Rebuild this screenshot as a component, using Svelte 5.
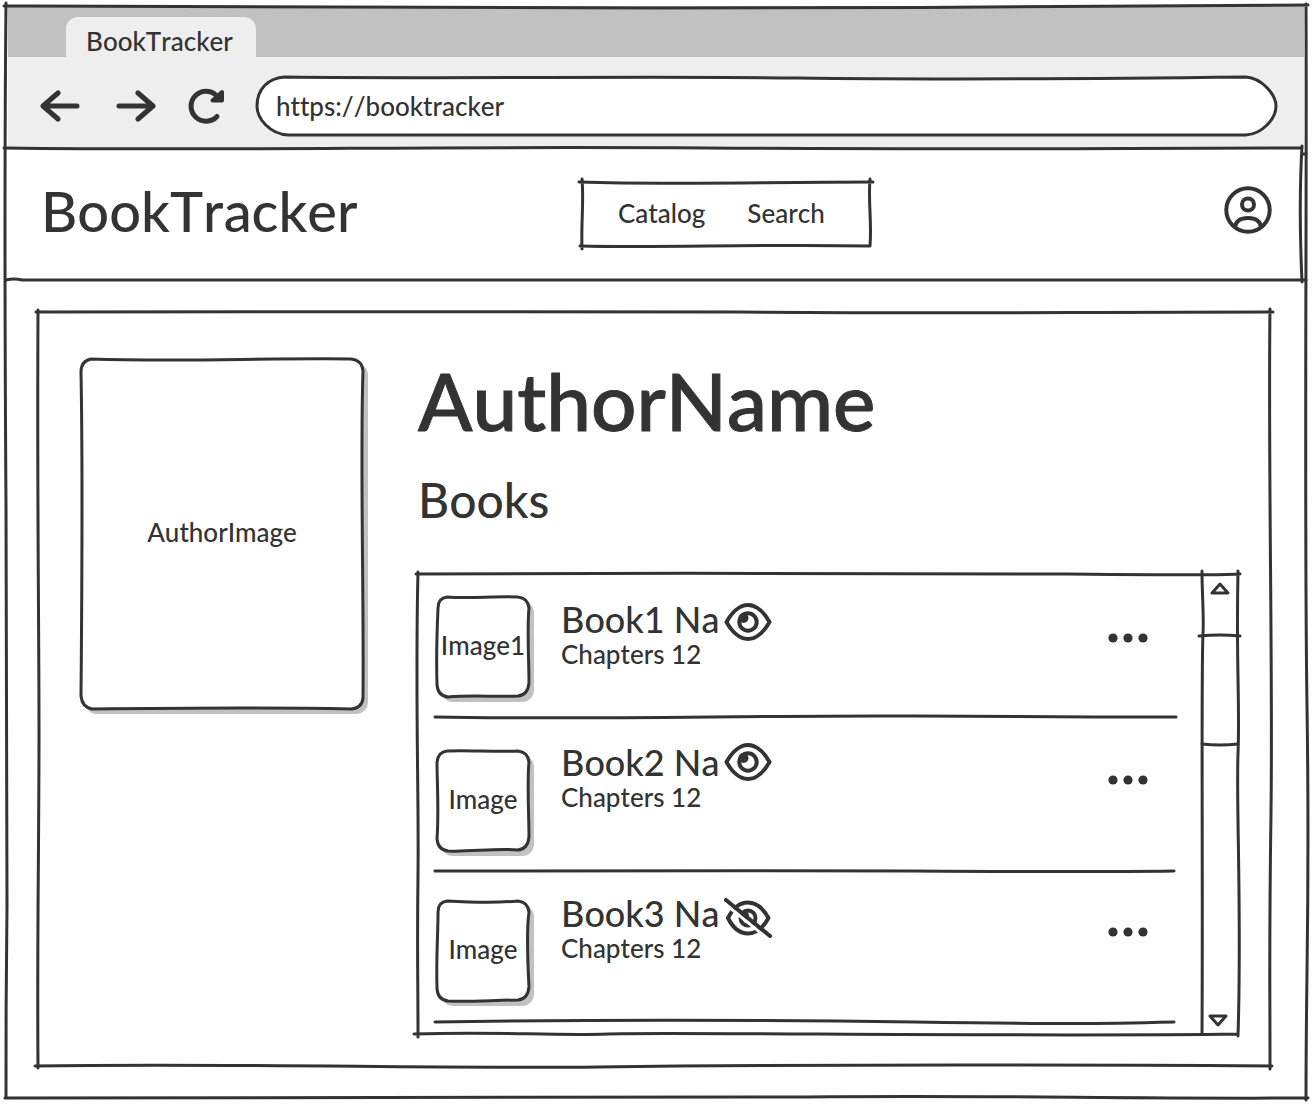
<script>
  const books = [
    { title: 'Book1 Na', image: 'Image1', chapters: 12, read: true, rule: 'M0 4 C150 7 330 2 480 3 S650 4 742 4' },
    { title: 'Book2 Na', image: 'Image', chapters: 12, read: true, rule: 'M0 4 C120 5 320 3 480 4 S660 5 740 4' },
    { title: 'Book3 Na', image: 'Image', chapters: 12, read: false, rule: 'M0 5 C130 3 330 3 480 5 S660 7 740 5' },
  ];
  let address = $state('https://booktracker');

  const thumbPaths = [
    'M12 2 C30 4 60 1 82 2 Q92 3 93 13 C91 35 93 65 93 88 Q92 100 82 101 C60 102 35 100 13 102 Q3 101 2 90 C1 60 2 35 3 13 Q3 3 12 2 Z',
    'M12 2 C30 1 60 3 82 2 Q92 3 93 13 C91 35 93 65 93 88 Q92 100 82 101 C60 99 35 103 13 102 Q3 101 2 90 C4 60 2 35 2 13 Q3 3 12 2 Z',
    'M12 2 C30 3 60 4 82 2 Q92 3 93 13 C90 35 92 65 93 88 Q92 100 82 101 C60 101 35 103 13 102 Q3 101 2 90 C1 60 3 35 3 13 Q3 3 12 2 Z',
  ];
</script>

{#snippet sketch(w, h, d)}
  <svg class="sketch" viewBox="0 0 {w} {h}" preserveAspectRatio="none" aria-hidden="true">
    <path {d} vector-effect="non-scaling-stroke" />
  </svg>
{/snippet}

<div class="page">
  <div class="window">
    <div class="tabs">
      <div class="tab">BookTracker</div>
    </div>
    <div class="toolbar">
      <button class="tool" aria-label="Back">
        <svg class="glyph" viewBox="0 0 40 32" width="40" height="32"><path d="M18 3 L3 16 L18 29 M3 16 H37" /></svg>
      </button>
      <button class="tool" aria-label="Forward">
        <svg class="glyph" viewBox="0 0 40 32" width="40" height="32"><path d="M22 3 L37 16 L22 29 M37 16 H3" /></svg>
      </button>
      <button class="tool reload" aria-label="Reload">
        <svg class="glyph" viewBox="0 0 38 36" width="38" height="36">
          <path d="M29 28.500 A15 15 0 1 1 28 7" />
          <path class="tip" d="M34 4 V12.500 H24.500 Z" />
        </svg>
      </button>
      <label class="address">
        {@render sketch(1018, 58, 'M29 0 C200 2 380 -1 540 1 S820 2 988 0 C1004 1 1018 18 1018 29 C1018 42 1004 57 988 58 C700 56 400 58 32 58 C14 57 1 42 1 29 C1 12 12 1 29 0 Z')}
        <input type="text" bind:value={address} aria-label="Address" />
      </label>
    </div>

    <header class="header">
      {@render sketch(1296, 132, 'M-2 0 C250 3 400 -2 700 0 S1100 0 1296 0 M1296 -2 C1293 50 1294 90 1296 134 M0 132 Q8 130 16 132 H1300 M1296 6 H1300')}
      <h1>BookTracker</h1>
      <nav class="nav">
        {@render sketch(288, 64, 'M-3 0 C90 3 180 0 291 0 M0 -3 C2 20 -1 40 0 67 M-2 64 C80 66 170 62 288 64 M288 -3 C286 20 290 40 288 64')}
        <a href="#catalog">Catalog</a>
        <a href="#search">Search</a>
      </nav>
      <button class="user" aria-label="Account">
        <svg class="glyph" viewBox="0 0 48 48" width="48" height="48">
          <circle cx="24" cy="24" r="21.7" />
          <circle cx="24" cy="18.5" r="6" />
          <path d="M11 41 C12 34 17 32 24 32 S36 34 37 41" />
        </svg>
      </button>
    </header>

    <main class="panel">
      {@render sketch(1232, 754, 'M-2 0 C300 2 450 -2 700 0 S1000 0 1235 0 M0 -2 C-1 200 1 300 1 420 S-1 620 0 756 M-3 754 C200 751 400 757 560 755 S900 752 1234 754 M1232 -3 C1230 150 1235 360 1233 500 S1232 650 1232 757')}
      <div class="portrait">
        <div class="shade"></div>
        {@render sketch(283, 352, 'M11 1 C100 4 180 0 270 1 Q281 2 282 13 C279 100 283 240 282 340 Q281 350 270 351 C180 349 90 350 12 351 Q2 349 1 338 C2 220 3 120 1 14 Q1 3 11 1 Z')}
        <span>AuthorImage</span>
      </div>
      <section class="details">
        <h2>AuthorName</h2>
        <h3>Books</h3>
        <div class="shelf">
          {@render sketch(820, 460, 'M-2 0 C200 -1 500 -1 650 0 S790 1 822 0 M0 -2 C-3 120 1 220 0 300 S0 400 0 463 M-4 460 C80 457 130 462 190 460 S620 463 820 460 M820 -3 C818 90 822 130 820 180 S824 340 820 462')}
          <ul>
            {#each books as book, i}
              <li>
                <div class="thumb">
                  <div class="shade"></div>
                  {@render sketch(95, 104, thumbPaths[i])}
                  <span>{book.image}</span>
                </div>
                <div class="info">
                  <div class="title">
                    <span>{book.title}</span>
                    <button aria-label={book.read ? 'Visible' : 'Hidden'}>
                      {#if book.read}
                        <svg class="glyph" viewBox="0 0 48 40" width="48" height="40">
                          <path d="M2.5 20 C8 10 16 3 24 3 S40 10 45.500 20 C40 30 32 37 24 37 S8 30 2.500 20 Z" />
                          <circle cx="24" cy="20" r="8.700" />
                          <circle class="dot" cx="19.500" cy="16" r="5" />
                        </svg>
                      {:else}
                        <svg class="glyph" viewBox="0 0 48 40" width="48" height="40">
                          <path d="M4 20 C9 10 16 4.500 24 4.500 S39 10 44.500 20 C39 30 32 35.500 24 35.500 S9 30 4 20 Z" />
                          <circle cx="24" cy="20" r="7.500" />
                          <circle class="dot" cx="20.500" cy="17.500" r="4.500" />
                          <path class="gap" d="M5 9 L41 38.500" />
                          <path d="M2 2 L46 38" />
                        </svg>
                      {/if}
                    </button>
                  </div>
                  <p>Chapters {book.chapters}</p>
                </div>
                <button class="more" aria-label="More">
                  <svg viewBox="0 0 40 10" width="40" height="10"><circle cx="5" cy="5" r="4.600" /><circle cx="20" cy="5" r="4.600" /><circle cx="35" cy="5" r="4.600" /></svg>
                </button>
                <svg class="rule" viewBox="0 0 742 8" preserveAspectRatio="none" aria-hidden="true">
                  <path d={book.rule} vector-effect="non-scaling-stroke" />
                </svg>
              </li>
            {/each}
          </ul>
          <div class="scroll">
            {@render sketch(36, 460, 'M0 -3 C0 20 2 40 1 60 C-1 100 1 300 0 460')}
            <button aria-label="Scroll up">
              <svg class="arrow" viewBox="0 0 20 14" width="20" height="14"><path d="M10 2 L18 11 H2 Z" /></svg>
            </button>
            <div class="handle">
              {@render sketch(36, 108, 'M-3 0 Q18 -2 38 0 M0 108 Q18 110 36 108')}
            </div>
            <button class="down" aria-label="Scroll down">
              <svg class="arrow" viewBox="0 0 20 14" width="20" height="14"><path d="M2 3 H18 L10 12 Z" /></svg>
            </button>
          </div>
        </div>
      </section>
    </main>
    {@render sketch(1300, 1092, 'M-2 0 C200 -1 400 2 650 2 S1000 1 1302 -1 M0 -3 C-2 200 -1 350 0 500 S2 800 1 900 S0 1000 0 1092 M-1 1092 C300 1090 600 1093 800 1091 S1100 1093 1302 1092 M1300 -2 C1301 200 1298 500 1301 700 S1300 950 1300 1094')}
  </div>
</div>

<style>
  :global(body) {
    margin: 0;
    background: #fff;
  }
  .page {
    box-sizing: border-box;
    min-height: 100vh;
    padding: 6px;
    display: flex;
    color: #333;
    font: 500 26px/32px Lato, 'Open Sans', sans-serif;
    font-kerning: none;
    font-variant-ligatures: none;
  }
  h1, h2, h3, p, ul {
    margin: 0;
    padding: 0;
    font-weight: 500;
  }
  h2 {
    -webkit-text-stroke: 1px #333;
  }
  button {
    display: block;
    padding: 0;
    border: 0;
    background: none;
    color: inherit;
    cursor: pointer;
  }
  svg {
    display: block;
  }
  .sketch {
    position: absolute;
    inset: 0;
    width: 100%;
    height: 100%;
    overflow: visible;
    pointer-events: none;
  }
  .sketch path, .rule path {
    fill: none;
    stroke: #333;
    stroke-width: 3;
    stroke-linecap: round;
    stroke-linejoin: round;
  }
  .glyph {
    fill: none;
    stroke: #333;
    stroke-width: 4;
    stroke-linecap: round;
    stroke-linejoin: round;
  }
  .glyph .dot {
    fill: #333;
    stroke: none;
  }
  .glyph .tip {
    fill: #333;
    stroke-width: 4;
  }
  .glyph .gap {
    stroke: #fff;
    stroke-width: 3;
  }
  .window {
    position: relative;
    flex: 1;
    display: flex;
    flex-direction: column;
  }
  .tabs {
    display: flex;
    margin: 0 2px;
    padding: 11px 58px 0;
    background: #c1c1c1;
  }
  .tab {
    min-width: 150px;
    padding: 8px 20px 0;
    border-radius: 12px 12px 0 0;
    background: #eee;
  }
  .toolbar {
    display: flex;
    align-items: center;
    margin: 0 2px;
    padding: 20px 28px 13px 32px;
    background: #eee;
  }
  .tool {
    margin-right: 36px;
  }
  .tool .glyph {
    stroke-width: 5;
  }
  .tool.reload {
    margin: 0 30px 0 -4px;
  }
  .address {
    position: relative;
    flex: 1;
    display: flex;
  }
  .address .sketch path {
    fill: #fff;
  }
  .address input {
    position: relative;
    flex: 1;
    min-width: 0;
    height: 58px;
    padding: 0 20px;
    border: 0;
    outline: 0;
    background: none;
    color: inherit;
    font: inherit;
    font-kerning: none;
    font-variant-ligatures: none;
  }
  .header {
    position: relative;
    display: grid;
    grid-template-columns: 541fr auto 402fr;
    align-items: center;
    min-height: 132px;
    padding: 0 30px 0 35px;
    box-sizing: border-box;
    margin-right: 4px;
  }
  h1 {
    margin-bottom: 6px;
    font-size: 56px;
    line-height: 64px;
  }
  .nav {
    position: relative;
    box-sizing: border-box;
    min-width: 288px;
    display: flex;
    gap: 42px;
    padding: 15px 36px 17px;
  }
  .nav a {
    color: inherit;
    text-decoration: none;
  }
  .user {
    justify-self: end;
    margin-bottom: 8px;
  }
  .panel {
    position: relative;
    flex: 1;
    display: flex;
    align-items: stretch;
    gap: 54px;
    margin: 32px 36px 32px 32px;
    padding: 46px 32px 32px 42px;
  }
  .portrait, .thumb {
    position: relative;
    flex: none;
    display: flex;
    align-items: center;
    justify-content: center;
  }
  .portrait {
    width: 284px;
    height: 352px;
  }
  .portrait span, .thumb span {
    position: relative;
    padding-bottom: 5px;
    white-space: nowrap;
  }
  .shade {
    position: absolute;
    inset: 5px -4px -4px 5px;
    border-radius: 12px;
    background: #c1c1c1;
  }
  .thumb .shade {
    inset: 6px -3px -3px 6px;
  }
  .portrait .sketch path, .thumb .sketch path {
    fill: #fff;
  }
  .details {
    flex: 1;
    min-width: 0;
    display: flex;
    flex-direction: column;
  }
  h2 {
    font-size: 80px;
    line-height: 84px;
  }
  h3 {
    margin-bottom: 40px;
    padding-top: 24px;
    font-size: 48px;
    line-height: 68px;
  }
  .shelf {
    position: relative;
    flex: 1;
    display: flex;
  }
  ul {
    flex: 1;
    min-width: 0;
    padding: 0 26px 0 17px;
    list-style: none;
  }
  li {
    display: flex;
    align-items: flex-start;
    flex-wrap: wrap;
  }
  .thumb {
    width: 96px;
    height: 104px;
    margin: 21px 30px 14px 0;
  }
  .info {
    flex: 1;
    padding-top: 25px;
  }
  .title {
    display: flex;
    align-items: flex-start;
    height: 40px;
    font-size: 36px;
    line-height: 40px;
    white-space: nowrap;
  }
  .title span {
    width: 163px;
  }
  .title button {
    margin-top: 3px;
  }
  .info p {
    line-height: 30px;
  }
  .more {
    margin: 59px 28px 0 0;
  }
  .rule {
    width: 100%;
    height: 8px;
    overflow: visible;
  }
  li:nth-child(2) .thumb {
    margin-top: 28px;
  }
  li:nth-child(2) .info {
    padding-top: 21px;
  }
  li:nth-child(2) .title button {
    margin-top: 0;
  }
  li:nth-child(2) .more {
    margin-top: 54px;
  }
  li:nth-child(3) .thumb {
    margin-top: 24px;
  }
  li:nth-child(3) .info {
    padding-top: 18px;
  }
  li:nth-child(3) .title button {
    margin-top: 5px;
  }
  li:nth-child(3) .more {
    margin-top: 52px;
  }
  .scroll {
    position: relative;
    flex: none;
    width: 36px;
    display: flex;
    flex-direction: column;
    align-items: center;
  }
  .arrow {
    fill: none;
    stroke: #333;
    stroke-width: 3;
    stroke-linejoin: round;
  }
  .scroll button {
    height: 62px;
    padding: 8px 0 40px;
    box-sizing: border-box;
  }
  .scroll .down {
    height: auto;
    margin-top: auto;
    padding: 0 4px 7px 0;
  }
  .handle {
    position: relative;
    width: 100%;
    height: 108px;
  }
  .more svg {
    fill: #333;
  }
</style>
